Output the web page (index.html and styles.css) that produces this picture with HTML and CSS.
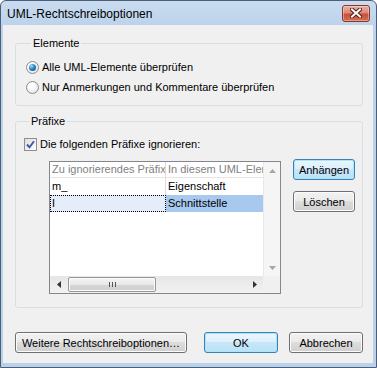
FILE: index.html
```html
<!DOCTYPE html>
<html lang="de">
<head>
<meta charset="utf-8">
<title>UML-Rechtschreiboptionen</title>
<link rel="stylesheet" href="styles.css">
</head>
<body>
<div class="window">
  <div class="titlebar">
    <span class="title">UML-Rechtschreiboptionen</span>
    <div class="close">
      <svg width="12" height="10" viewBox="0 0 12 10"><path d="M2 1.5 L10 8.5 M10 1.5 L2 8.5" stroke="#5a1d15" stroke-width="4" stroke-linecap="square" fill="none"/><path d="M2 1.5 L10 8.5 M10 1.5 L2 8.5" stroke="#ffffff" stroke-width="2" stroke-linecap="square" fill="none"/></svg>
    </div>
  </div>
  <div class="client">
    <fieldset class="group g1">
      <legend>Elemente</legend>
      <div class="opt r1"><span class="radio checked"><span class="dot"></span></span><span>Alle UML-Elemente überprüfen</span></div>
      <div class="opt r2"><span class="radio"></span><span>Nur Anmerkungen und Kommentare überprüfen</span></div>
    </fieldset>
    <fieldset class="group g2">
      <legend>Präfixe</legend>
      <div class="opt chk-row"><span class="check"><svg width="9" height="9" viewBox="0 0 9 9"><path d="M1 4.5 L3.5 7.2 L8 1.2" stroke="#3d5aa3" stroke-width="1.9" fill="none"/></svg></span><span>Die folgenden Präfixe ignorieren:</span></div>
      <div class="prefix-area">
        <div class="list">
          <div class="lv">
            <div class="lv-hdr"><span class="c1">Zu ignorierendes Präfix</span><span class="c2">In diesem UML-Element</span></div>
            <div class="lv-row"><span class="c1">m_</span><span class="c2">Eigenschaft</span></div>
            <div class="lv-row sel"><span class="c1 focus">I</span><span class="c2">Schnittstelle</span></div>
          </div>
          <div class="vscroll">
            <div class="sbtn"><svg width="7" height="4" viewBox="0 0 7 4"><path d="M0 4 L3.5 0 L7 4 Z" fill="#a6a6a6"/></svg></div>
            <div class="sbtn"><svg width="7" height="4" viewBox="0 0 7 4"><path d="M0 0 L3.5 4 L7 0 Z" fill="#a6a6a6"/></svg></div>
          </div>
          <div class="hscroll">
            <div class="sbtn"><svg width="4" height="7" viewBox="0 0 4 7"><path d="M4 0 L0 3.5 L4 7 Z" fill="#333"/></svg></div>
            <div class="thumb"><svg width="7" height="5" viewBox="0 0 7 5"><path d="M0.5 0 V5 M3.5 0 V5 M6.5 0 V5" stroke="#555" stroke-width="1"/></svg></div>
            <div class="track"></div>
            <div class="sbtn"><svg width="4" height="7" viewBox="0 0 4 7"><path d="M0 0 L4 3.5 L0 7 Z" fill="#333"/></svg></div>
          </div>
          <div class="corner"></div>
        </div>
        <div class="side-buttons">
          <button class="btn default side">Anhängen</button>
          <button class="btn side">Löschen</button>
        </div>
      </div>
    </fieldset>
    <div class="footer">
      <button class="btn wide">Weitere Rechtschreiboptionen…</button>
      <button class="btn default ok">OK</button>
      <button class="btn cancel">Abbrechen</button>
    </div>
  </div>
</div>
</body>
</html>
```
FILE: styles.css
```css
* { box-sizing: border-box; }
html, body { margin: 0; padding: 0; }
body {
  width: 377px;
  height: 368px;
  overflow: hidden;
  background: #ffffff;
  font-family: "Liberation Sans", Arial, sans-serif;
  font-size: 11px;
  color: #000;
}
.window {
  width: 377px;
  height: 368px;
  display: flex;
  flex-direction: column;
  border: 1px solid #4c5f77;
  border-radius: 6px 6px 0 0;
  background: linear-gradient(#cadcf0, #bcd3eb 24px, #b9d1ea);
  padding: 0 3px 4px 2px;
}
.titlebar {
  height: 24px;
  display: flex;
  align-items: center;
  justify-content: space-between;
  padding: 1px 3px 0 4px;
}
.title { font-size: 12px; color: #000; }
.close {
  width: 28px;
  height: 17px;
  margin-top: -1px;
  border: 1px solid #87372c;
  border-radius: 3px;
  background: linear-gradient(#eab0a3, #dc8a76 45%, #c9503a 55%, #d26e55);
  box-shadow: inset 0 0 0 1px rgba(255,255,255,0.35);
  display: flex;
  align-items: center;
  justify-content: center;
}
.client {
  flex: 1;
  background: #f0f0f0;
  display: flex;
  flex-direction: column;
  padding: 0 10px 10px 12px;
}
.group {
  margin: 0;
  padding: 0;
  border: 1px solid #d5dfe5;
  border-radius: 3px;
  min-width: 0;
}
.group legend {
  margin-left: 5px;
  padding: 0 2px;
  line-height: 14px;
  font-size: 11px;
}
.g1 { margin-top: 11px; padding: 0 0 10px 10px; }
.g2 { margin-top: 8px; padding: 0 0 13px 8px; }
.opt {
  display: flex;
  align-items: center;
  height: 16px;
  gap: 3px;
}
.r1 { margin-top: 9px; }
.r2 { margin-top: 4px; }
.chk-row { margin-top: 8px; }
.radio {
  width: 13px;
  height: 13px;
  border-radius: 50%;
  border: 1px solid #8d8d8d;
  background: radial-gradient(circle at 40% 35%, #ffffff 20%, #dcdcdc 100%);
  display: inline-flex;
  align-items: center;
  justify-content: center;
  flex: none;
}
.dot {
  width: 7px;
  height: 7px;
  border-radius: 50%;
  background: radial-gradient(circle at 35% 30%, #a6e0fb 0%, #2a85c9 45%, #0e3d75 100%);
}
.check {
  width: 13px;
  height: 13px;
  border: 1px solid #8e8f8f;
  background: linear-gradient(135deg, #dedede, #ffffff);
  display: inline-flex;
  align-items: center;
  justify-content: center;
  flex: none;
}
.prefix-area {
  display: flex;
  align-items: flex-start;
  margin-top: 7px;
  padding-left: 25px;
}
.list {
  width: 232px;
  height: 133px;
  margin-top: 2px;
  border: 1px solid #828790;
  background: #fff;
  display: grid;
  grid-template-columns: 213px 17px;
  grid-template-rows: 114px 17px;
}
.lv { overflow: hidden; }
.lv-hdr, .lv-row { display: flex; white-space: nowrap; }
.lv-hdr { height: 16px; line-height: 15px; color: #7f7f7f; border-bottom: 1px solid #e5e5e5; }
.lv-row { height: 17px; line-height: 17px; }
.c1 { width: 116px; flex: none; padding-left: 2px; border-right: 1px solid #dcdcdc; overflow: hidden; }
.c2 { flex: 1; padding-left: 2px; overflow: hidden; }
.sel .c1.focus {
  background: #e4edf9;
  border: 1px dotted #000;
  line-height: 15px;
  padding-left: 1px;
}
.sel .c2 { background: #a8c9ee; }
.vscroll {
  background: #f5f5f5;
  border-left: 1px solid #e9e9e9;
  display: flex;
  flex-direction: column;
  justify-content: space-between;
}
.vscroll .sbtn { height: 17px; display: flex; align-items: center; justify-content: center; }
.hscroll {
  background: linear-gradient(#e6e6e6, #f2f2f2);
  display: flex;
  align-items: center;
}
.hscroll .sbtn { width: 17px; height: 17px; flex: none; display: flex; align-items: center; justify-content: center; }
.hscroll .track { flex: 1; }
.thumb {
  width: 88px;
  height: 15px;
  margin-left: 1px;
  border: 1px solid #979797;
  border-radius: 2px;
  background: linear-gradient(#f4f4f4, #e8e8e8 50%, #d6d6d6 50%, #d0d0d0);
  box-shadow: inset 0 0 0 1px #fbfbfb;
  display: flex;
  align-items: center;
  justify-content: center;
}
.corner { background: #f0f0f0; }
.side-buttons {
  display: flex;
  flex-direction: column;
  gap: 11px;
  margin-left: 12px;
}
.btn {
  font-family: "Liberation Sans", Arial, sans-serif;
  font-size: 11px;
  color: #000;
  height: 21px;
  padding: 0;
  border: 1px solid #707070;
  border-radius: 3px;
  background: linear-gradient(#f2f2f2, #ebebeb 45%, #dddddd 50%, #cfcfcf);
  box-shadow: inset 0 0 0 1px #fbfbfb;
}
.btn.default {
  border-color: #3c7fb1;
  background: linear-gradient(#eaf6fd, #dcf0fc 45%, #c7e6f9 50%, #bde1f6);
  box-shadow: inset 0 0 0 1px #a8e6fb;
}
.side { width: 62px; }
.footer {
  margin-top: auto;
  display: flex;
}
.wide { width: 172px; }
.ok { width: 74px; margin-left: 17px; }
.cancel { width: 74px; margin-left: 11px; }
```
